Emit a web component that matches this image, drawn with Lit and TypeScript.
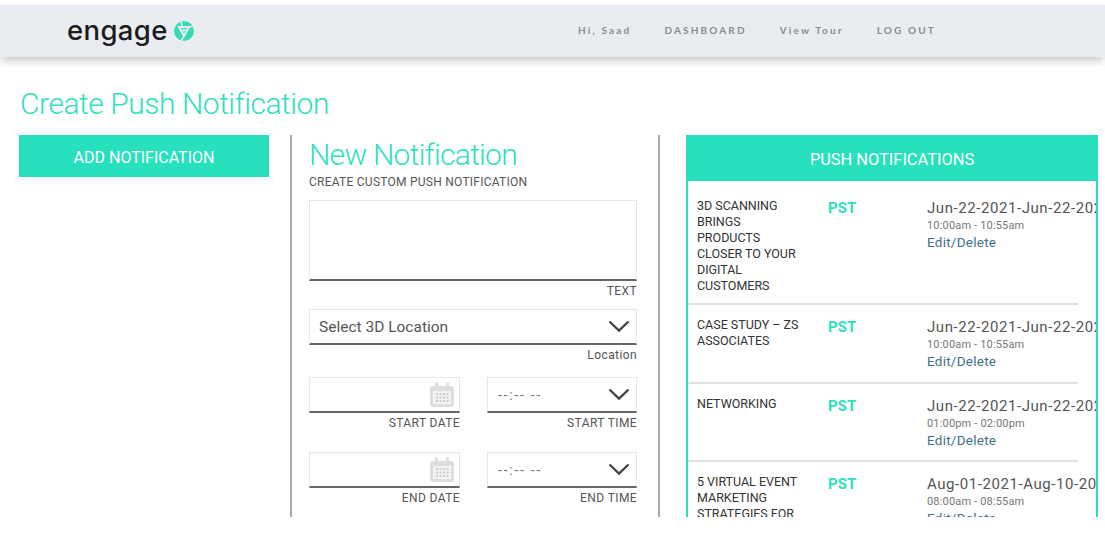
import { LitElement, html, css, svg } from "lit";
import { customElement } from "lit/decorators.js";

const chevron = html`<svg class="chev" width="22" height="13" viewBox="0 0 22 13" fill="none"><path d="M1.5 1.5 L11 10.5 L20.5 1.5" stroke="#444" stroke-width="2.4"/></svg>`;
const cal = html`<svg class="cal" width="26" height="26" viewBox="0 0 26 26">
  <rect x="1" y="4" width="24" height="21" rx="3" fill="#dedede"/>
  <rect x="6" y="0.5" width="3" height="6" fill="#dedede"/><rect x="17" y="0.5" width="3" height="6" fill="#dedede"/>
  <rect x="4" y="9" width="18" height="13" fill="#f3f3f3"/>
  ${[8, 11.5, 15, 18.5].flatMap((x) => [12, 15.5, 19].map((y) => svg`<rect x="${x - 1}" y="${y - 1}" width="2" height="2" fill="#cccccc"/>`))}
</svg>`;

const items = [
  { t: ["3D SCANNING", "BRINGS", "PRODUCTS", "CLOSER TO YOUR", "DIGITAL", "CUSTOMERS"], d: "Jun-22-2021-Jun-22-2021", h: "10:00am - 10:55am", r: 124 },
  { t: ["CASE STUDY – ZS", "ASSOCIATES"], d: "Jun-22-2021-Jun-22-2021", h: "10:00am - 10:55am", r: 78.5 },
  { t: ["NETWORKING"], d: "Jun-22-2021-Jun-22-2021", h: "01:00pm - 02:00pm", r: 78.5 },
  { t: ["5 VIRTUAL EVENT", "MARKETING", "STRATEGIES FOR"], d: "Aug-01-2021-Aug-10-2021", h: "08:00am - 08:55am", r: 90 },
];

@customElement("app-root")
export class AppRoot extends LitElement {
  static styles = css`
    :host { display: block; height: 517px; overflow: hidden; padding-top: 5px; box-sizing: border-box; background: #fff; font-family: Roboto, "Liberation Sans", sans-serif; color: #555; }
    .top { height: 52px; background: #e9ecf0; box-shadow: 0 5px 8px -1px rgba(0,0,0,.2); display: flex; align-items: center; padding-left: 67px; }
    .logo { display: flex; align-items: center; gap: 6px; width: 511px; }
    .word { font-family: Inter, sans-serif; font-weight: 500; font-size: 27.5px; line-height: 30px; color: #1c1c1c; width: 101px; letter-spacing: .35px; position: relative; top: -1px; }
    .nav { display: flex; gap: 33px; font-family: Lato, sans-serif; font-size: 10px; letter-spacing: 2.15px; color: #8a8d91; font-weight: 700; position: relative; top: -1px; }
    h1 { margin: 0; padding: 32px 0 0 20px; height: 46px; font-weight: 300; font-size: 30px; line-height: 30px; color: #2fe0bd; letter-spacing: -.45px; box-sizing: content-box; }
    .main { display: flex; padding-left: 19px; height: 390px; }
    .left { width: 250px; }
    .add { height: 42px; padding-top: 2px; box-sizing: border-box; background: #28e0bb; color: #fff; font-size: 16px; display: flex; align-items: center; justify-content: center; }
    .mid { margin-left: 21px; width: 328px; flex: none; border-left: 2px solid #a9a9a9; border-right: 2px solid #a9a9a9; padding: 0 21px 0 17px; }
    .mid h2 { margin: 0; font-weight: 300; font-size: 30px; line-height: 38px; color: #2fe0bd; padding-top: 1px; letter-spacing: -.7px; }
    .sub { font-size: 12px; line-height: 14px; letter-spacing: .25px; color: #555; margin-top: 1px; margin-bottom: 11px; }
    .box { border: 1px solid #e6e6e6; border-bottom: 2px solid #666; box-sizing: border-box; display: flex; align-items: center; position: relative; background: #fff; }
    .lab { text-align: right; font-size: 12px; line-height: 14px; letter-spacing: .4px; color: #555; }
    .ta { height: 81px; }
    .sel { height: 36px; padding: 0 6px 0 9px; font-size: 15.5px; justify-content: space-between; color: #555; }
    .pair { display: grid; grid-template-columns: 151px 150px; gap: 0 27px; }
    .dt { height: 36px; padding-right: 4px; justify-content: flex-end; }
    .tm { height: 36px; padding: 0 6px 0 10px; justify-content: space-between; font-size: 14px; letter-spacing: 1.75px; color: #777; }
    .l1 { margin-top: 3px; margin-bottom: 11px; }
    .l2 { margin-top: 3px; margin-bottom: 15px; }
    .l3 { margin-top: 3px; margin-bottom: 22px; }
    .l4 { margin-top: 3px; }
    .cal { flex: none; }
    .panel { margin-left: 26px; width: 412px; flex: none; box-sizing: border-box; border: 2px solid #2be0bc; border-bottom: 0; overflow: hidden; }
    .phead { height: 44px; margin: 0 -2px; background: #28e0bb; color: #fff; font-size: 16.4px; display: flex; align-items: center; justify-content: center; }
    .row { --o: 0px; border-bottom: 2px solid #e2e2e2; margin-right: 18px; box-sizing: border-box; display: flex; white-space: nowrap; }
    .phead + .row { --o: 5px; }
    .row:last-child { border-bottom: 0; }
    .ttl { flex: none; width: 140px; padding: calc(12px + var(--o)) 0 0 9px; box-sizing: border-box; font-size: 12.5px; line-height: 16px; letter-spacing: -.02px; color: #333; }
    .pst { flex: none; width: 99px; padding-top: calc(13px + var(--o)); font-size: 15px; line-height: 18px; font-weight: 700; color: #2fe0bd; }
    .info { padding-top: calc(12px + var(--o)); width: 170px; flex: none; }
    .date { font-size: 15px; line-height: 20px; letter-spacing: .57px; color: #555; }
    .hr { font-size: 11px; line-height: 13px; letter-spacing: .17px; color: #777; margin-top: 1px; }
    .ed { font-size: 13.5px; line-height: 18px; letter-spacing: .25px; color: #3f7088; margin-top: 1px; }
  `;

  render() {
    return html`
      <div class="top">
        <div class="logo">
          <span class="word">engage</span>
          <svg width="20" height="20" viewBox="0 0 20 20">
            <circle cx="10" cy="10" r="10" fill="#38dcb4"/>
            <path d="M5 6 H15 L10 15 Z" fill="none" stroke="#e9ecf0" stroke-width="2"/>
            <path d="M7 0 L8.5 6 M15 6 L20 5 M10 15 L7 20" stroke="#e9ecf0" stroke-width="1.6"/>
            <path d="M8 8 H12 L10 11.5 Z" fill="#e9ecf0"/>
          </svg>
        </div>
        <div class="nav"><span>Hi, Saad</span><span>DASHBOARD</span><span>View Tour</span><span>LOG OUT</span></div>
      </div>
      <h1>Create Push Notification</h1>
      <div class="main">
        <div class="left"><div class="add">ADD NOTIFICATION</div></div>
        <div class="mid">
          <h2>New Notification</h2>
          <div class="sub">CREATE CUSTOM PUSH NOTIFICATION</div>
          <div class="box ta"></div>
          <div class="lab l1">TEXT</div>
          <div class="box sel"><span>Select 3D Location</span>${chevron}</div>
          <div class="lab l2">Location</div>
          <div class="pair">
            <div><div class="box dt">${cal}</div><div class="lab l3">START DATE</div></div>
            <div><div class="box tm"><span>--:-- --</span>${chevron}</div><div class="lab l3">START TIME</div></div>
            <div><div class="box dt">${cal}</div><div class="lab l4">END DATE</div></div>
            <div><div class="box tm"><span>--:-- --</span>${chevron}</div><div class="lab l4">END TIME</div></div>
          </div>
        </div>
        <div class="panel">
          <div class="phead">PUSH NOTIFICATIONS</div>
          ${items.map((i) => html`
            <div class="row" style="height:${i.r}px">
              <div class="ttl">${i.t.map((l) => html`<div>${l}</div>`)}</div>
              <div class="pst">PST</div>
              <div class="info">
                <div class="date">${i.d}</div>
                <div class="hr">${i.h}</div>
                <div class="ed">Edit/Delete</div>
              </div>
            </div>`)}
        </div>
      </div>
    `;
  }
}
